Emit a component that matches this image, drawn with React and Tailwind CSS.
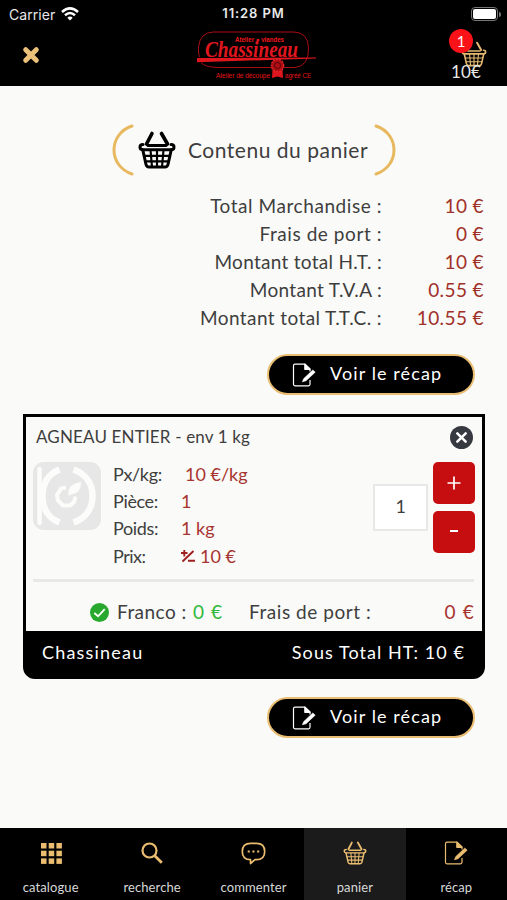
import clsx from 'clsx';

const totals = [
  ['Total Marchandise :', '10 €', 'tracking-[0.56px]'],
  ['Frais de port :', '0 €', 'tracking-[0.56px]'],
  ['Montant total H.T. :', '10 €', 'tracking-[0.3px]'],
  ['Montant T.V.A :', '0.55 €', 'tracking-[0.34px]'],
  ['Montant total T.T.C. :', '10.55 €', 'tracking-[0.4px]'],
];

const details = [
  ['Px/kg:', '10 €/kg', 'pl-1'],
  ['Pièce:', '1', ''],
  ['Poids:', '1 kg', ''],
];

function BasketIcon({ className, stroke = 3 }) {
  return (
    <svg viewBox="0 0 38 38" className={className} fill="none" stroke="currentColor" strokeWidth={stroke} strokeLinecap="round" strokeLinejoin="round">
      <path d="M14 2.5 L8.5 13 M23.5 2.5 L29.5 13" strokeWidth={stroke + 0.6} />
      <path d="M10 14.5 H28 M5 13.5 Q2 13.5 2 16 Q2 18.8 5 18.8 H33 Q36 18.8 36 16 Q36 13.5 33 13.5" />
      <path d="M4.8 19 L8 33.5 Q8.6 36 11 36 H27 Q29.4 36 30 33.5 L33.2 19" />
      <path d="M6.5 24.8 H31.5 M7.5 30.3 H30.5 M12.5 19 L14 36 M19 19 V36 M25.5 19 L24 36" strokeWidth={stroke * 0.72} />
    </svg>
  );
}

function NoteIcon({ className }) {
  return (
    <svg viewBox="0 0 24 24" className={className} fill="none" stroke="currentColor" strokeWidth="1.2" strokeLinejoin="round">
      <path d="M18 8.5 V6 L13 1.2 H3 Q1.5 1.2 1.5 2.7 V21.3 Q1.5 22.8 3 22.8 H16.5 Q18 22.8 18 21.3 V17" />
      <path d="M12.8 1.2 V6.3 H18 Z" fill="currentColor" />
      <path d="M10.4 18.7 L11.8 15.6 L20.8 7 L23.2 9.2 L14 17.8 Z" fill="currentColor" strokeWidth="0.6" />
    </svg>
  );
}

function Logo() {
  return (
    <svg viewBox="0 0 120 52" className="h-[52px] w-[120px] overflow-visible" fill="none">
      <path d="M2.5 26 Q1 23 1.5 16 Q3 1.500 16 1 H97 Q111 1.500 111.5 17 Q112 35 98 36.5 H20 Q8 36 4 31.5" stroke="#a80d14" strokeWidth="1" />
      <text x="38" y="10.500" textLength="49" lengthAdjust="spacingAndGlyphs" fontSize="6.8" fill="#f0161e" className="font-['Liberation_Sans'] font-bold">Atelier ● viandes</text>
      <text x="8" y="25.500" textLength="93" lengthAdjust="spacingAndGlyphs" fontSize="23.500" fill="#e0161e" className="font-['Liberation_Serif'] font-bold italic">Chassineau</text>
      <path d="M0 27 L119 26.4 V27.4 L0 31.3 Z" fill="#e0161e" />
      <path d="M75.500 38 L75 47 L80.5 45.5 L86 47 L85.500 38 Z" fill="#e0161e" />
      <circle cx="80.5" cy="34.5" r="6.2" fill="#b10d14" stroke="#e2262c" strokeWidth="1.3" strokeDasharray="2 1" />
      <circle cx="80.5" cy="34.5" r="3.1" stroke="#4a0507" strokeWidth="0.9" />
      <text x="19" y="46.500" textLength="54" lengthAdjust="spacingAndGlyphs" fontSize="7.2" fill="#e8141c" className="font-['Liberation_Sans']">Atelier de découpe</text>
      <text x="88" y="46.500" textLength="26" lengthAdjust="spacingAndGlyphs" fontSize="7.2" fill="#e8141c" className="font-['Liberation_Sans']">agréé CE</text>
    </svg>
  );
}

function RecapButton() {
  return (
    <button className="flex h-[41px] w-[208px] items-center rounded-full border-[2px] border-[#e9bd72] bg-black pl-[23px] text-white">
      <NoteIcon className="size-6" />
      <span className="ml-[14px] whitespace-nowrap pb-1 text-[18px] leading-none tracking-[1.1px]">Voir le récap</span>
    </button>
  );
}

function Thumb() {
  return (
    <svg viewBox="0 0 68 68" className="size-[68px]" fill="none" stroke="#fcfcfa">
      <rect width="68" height="68" rx="11" fill="#e7e7e7" stroke="none" />
      <path d="M6.500 7 V61" strokeWidth="4.500" strokeLinecap="round" />
      <path d="M26.500 7.500 C15 12 9.500 22 9.500 34 C9.500 46 15 56 26.500 60.500" strokeWidth="6.500" />
      <path d="M40.500 7.500 C53 12 59.500 22 59.500 34 C59.500 46 53 56 40.500 60.500" strokeWidth="6.500" />
      <path d="M33 25.500 L28 26.500 L24 33 L25 38.500 L30 43.500 H37 L41 40 L42.500 34.500" strokeWidth="4" />
      <path d="M35.500 32 Q34.500 22 48 20 Q48.500 31 38.500 32.500 L35.500 34 Z" fill="#fcfcfa" stroke="none" />
    </svg>
  );
}

function StatusBar() {
  return (
    <div className="grid h-7 grid-cols-3 items-center px-[9px] font-[Inter] text-[13px] text-[#e8e8e8]">
      <div className="flex items-center gap-[6px]">
        <span className="text-[14px] tracking-[0.05px]">Carrier</span>
        <svg viewBox="0 0 18 14" className="h-[14px] w-[18px]" fill="none" stroke="#fff" strokeWidth="2.500">
          <path d="M1 5 Q9 -2.200 17 5" />
          <path d="M4 8.300 Q9 3.800 14 8.300" />
          <path d="M9 13.500 L6.300 10.700 Q9 8.500 11.700 10.700 Z" fill="#fff" stroke="none" />
        </svg>
      </div>
      <span className="whitespace-nowrap text-center font-semibold tracking-[0.9px]">11:28 PM</span>
      <div className="mr-[-3px] flex items-center justify-end">
        <div className="h-[14px] w-[27px] rounded-[4px] border border-[#777] p-[1px]">
          <div className="h-full rounded-[2px] bg-white" />
        </div>
        <div className="ml-px h-[5px] w-[2px] rounded-r-full bg-[#777]" />
      </div>
    </div>
  );
}

const tabs = [
  {
    label: 'catalogue',
    icon: (
      <svg viewBox="0 0 21 21" className="ml-px size-[21px]" fill="currentColor">
        {[0, 7.7, 15.4].map((y) => [0, 7.7, 15.4].map((x) => <rect key={`${x}-${y}`} x={x} y={y} width="5.500" height="5.500" />))}
      </svg>
    ),
  },
  {
    label: 'recherche',
    icon: (
      <svg viewBox="0 0 22 22" className="size-[22px]" fill="none" stroke="currentColor" strokeWidth="2.200">
        <circle cx="8.500" cy="8.500" r="7" />
        <path d="M13.500 13.500 L20.800 20.800" strokeWidth="2.800" />
      </svg>
    ),
  },
  {
    label: 'commenter',
    icon: (
      <svg viewBox="0 0 25 23" className="h-[23px] w-[25px]" fill="none" stroke="currentColor" strokeWidth="1.700" strokeLinejoin="round">
        <path d="M9.500 1.300 H15.500 Q23.700 1.300 23.700 9.500 Q23.700 17.700 15.500 17.700 H14 L9.500 21.500 V17.700 Q1.300 17.700 1.300 9.500 Q1.300 1.300 9.500 1.300 Z" />
        <path d="M6.700 9.500 H8.800 M11.400 9.500 H13.500 M16.100 9.500 H18.200" strokeWidth="2.100" />
      </svg>
    ),
  },
  { label: 'panier', icon: <BasketIcon className="size-6" stroke={2.3} />, active: true },
  { label: 'récap', icon: <NoteIcon className="size-6" /> },
];

export default function App() {
  return (
    <div className="flex h-[900px] w-[507px] flex-col overflow-hidden bg-[#fafaf8] font-[Lato,sans-serif] text-[#3e3e3e]">
      <header className="h-[86px] shrink-0 bg-black">
        <StatusBar />
        <div className="flex h-[58px]">
          <svg viewBox="0 0 18 18" className="ml-[22px] mt-[18px] size-[18px]" stroke="#ebc078" strokeWidth="5" strokeLinecap="round">
            <path d="M3.700 3.700 L14.300 14.300 M14.300 3.700 L3.700 14.300" />
          </svg>
          <div className="ml-[157px] mt-[3px]">
            <Logo />
          </div>
          <div className="relative ml-auto mr-[20px] w-[40px]">
            <BasketIcon className="absolute right-[0px] top-[13px] size-[26px] text-[#e5ba72]" stroke={2.3} />
            <span className="absolute left-[2px] top-px flex size-6 items-center justify-center rounded-full bg-[#fb1219] text-[15px] text-white">1</span>
            <span className="absolute left-[4px] top-[34px] whitespace-nowrap text-[17px] leading-5 tracking-[0.2px] text-[#e8e8e8]">10€</span>
          </div>
        </div>
      </header>

      <main className="flex-1">
        <div className="ml-[112px] mt-[38px] flex h-[52px] w-[284px] items-center">
          <svg viewBox="0 0 22 52" className="h-[52px] w-[22px]" fill="none" stroke="#e8b85f" strokeWidth="3" strokeLinecap="round">
            <path d="M20 2 C-4 10 -4 42 20 50" />
          </svg>
          <BasketIcon className="ml-[4px] size-[38px] text-black" />
          <h1 className="ml-[12px] w-[182px] whitespace-nowrap pb-[2px] text-[21px] leading-none tracking-[0.52px]">Contenu du panier</h1>
          <svg viewBox="0 0 22 52" className="ml-auto h-[52px] w-[22px] shrink-0" fill="none" stroke="#e8b85f" strokeWidth="3" strokeLinecap="round">
            <path d="M2 2 C26 10 26 42 2 50" />
          </svg>
        </div>

        <div className="mr-[23px] mt-[16px]">
          {totals.map(([label, value, spacing]) => (
            <div key={label} className="flex h-7 items-center justify-end whitespace-nowrap text-[19px]">
              <span className={spacing}>{label}</span>
              <span className="w-[102px] text-right tracking-[0.4px] text-[#a03028]">{value}</span>
            </div>
          ))}
        </div>

        <div className="ml-[267px] mt-[22px]">
          <RecapButton />
        </div>

        <section className="ml-[23px] mt-[19px] h-[265px] w-[462px] overflow-hidden rounded-b-[12px] border-[3px] border-black bg-black">
          <div className="h-[214px] bg-[#fafaf8] px-[7px]">
            <div className="flex h-[42px] items-center justify-between pl-[3px] pr-[2px]">
              <h2 className="pb-[2px] text-[17px] tracking-[0.16px]">AGNEAU ENTIER - env 1 kg</h2>
              <svg viewBox="0 0 22 22" className="mb-[2px] size-[23px]" stroke="#fff" strokeWidth="2.400" strokeLinecap="round">
                <circle cx="11" cy="11" r="11" fill="#363940" stroke="none" />
                <path d="M7 7 L15 15 M15 7 L7 15" />
              </svg>
            </div>
            <div className="flex h-[120px] items-start">
              <div className="mt-[3px]">
                <Thumb />
              </div>
              <div className="ml-[12px] mt-[2px] w-[262px] text-[18px]">
                {details.map(([label, value, pad]) => (
                  <div key={label} className="flex h-[27px] items-center">
                    <span className="w-[68px] tracking-[-0.35px]">{label}</span>
                    <span className={clsx('text-[#a83430]', pad)}>{value}</span>
                  </div>
                ))}
                <div className="flex h-7 items-center">
                  <span className="w-[68px] tracking-[-0.5px]">Prix:</span>
                  <svg viewBox="0 0 14 14" className="mr-[5px] size-[14px]" fill="none" stroke="#a02020" strokeWidth="1.900">
                    <path d="M0 4 H6.500 M3.300 1 V7.500 M1.500 12.500 L12.500 2 M7 11.800 H14" />
                  </svg>
                  <span className="text-[#a83430]">10 €</span>
                </div>
              </div>
              <div className="mt-[25px] flex h-[47px] w-[55px] items-center justify-center border-2 border-[#e8e8e8] bg-white pb-[3px] text-[18px]">1</div>
              <div className="ml-[5px] mt-[3px] flex flex-col gap-[7px] text-white">
                <button className="flex size-[42px] items-center justify-center rounded-[5px] bg-[#c60d10]">
                  <svg viewBox="0 0 14 14" className="size-[14px]" stroke="currentColor" strokeWidth="1.700"><path d="M0.500 7 H13.500 M7 0.500 V13.500" /></svg>
                </button>
                <button className="flex size-[42px] items-center justify-center rounded-[5px] bg-[#c60d10] pb-[2px]">
                  <svg viewBox="0 0 14 14" className="size-[14px]" stroke="currentColor" strokeWidth="1.800"><path d="M3 7 H11" /></svg>
                </button>
              </div>
            </div>
            <div className="mr-px h-[3px] bg-[#e8e8e6]" />
            <div className="flex h-[49px] items-center whitespace-nowrap pl-[57px] pt-[12px] text-[19px]">
              <svg viewBox="0 0 20 20" className="mr-[8px] size-[19px]" fill="none" stroke="#fff" strokeWidth="2">
                <circle cx="10" cy="10" r="10" fill="#28a92e" stroke="none" />
                <path d="M4.500 10.500 L8.500 14 L15.500 6.500" />
              </svg>
              <span className="w-[76px] tracking-[0.45px]">Franco :</span>
              <span className="w-[56px] tracking-[1.1px] text-[#32b93c]">0 €</span>
              <span className="tracking-[0.55px]">Frais de port :</span>
              <span className="ml-auto tracking-[1.2px] text-[#a83430]">0 €</span>
            </div>
          </div>
          <div className="flex h-[45px] items-center justify-between whitespace-nowrap pb-[3px] pl-[16px] pr-[17px] text-[18px] text-white">
            <span className="tracking-[1.2px]">Chassineau</span>
            <span className="tracking-[1.06px]">Sous Total HT: 10 €</span>
          </div>
        </section>

        <div className="ml-[267px] mt-[18px]">
          <RecapButton />
        </div>
      </main>

      <nav className="grid h-[72px] shrink-0 grid-cols-5 bg-black">
        {tabs.map((tab) => (
          <div key={tab.label} className={clsx('flex flex-col items-center', tab.active && 'bg-[#1b1b1b]')}>
            <div className="mt-[12px] flex h-[26px] items-center text-[#eabd70]">{tab.icon}</div>
            <span className="mt-[12px] text-[13px] leading-[18px] tracking-[0.1px] text-[#d8d8d8]">{tab.label}</span>
          </div>
        ))}
      </nav>
    </div>
  );
}
